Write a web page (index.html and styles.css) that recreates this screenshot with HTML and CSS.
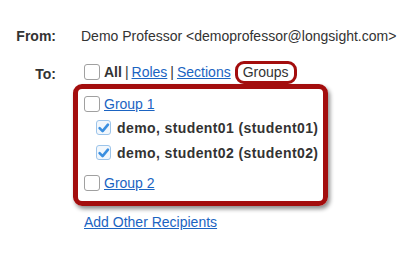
FILE: index.html
```html
<!DOCTYPE html>
<html lang="en">
<head>
  <meta charset="utf-8">
  <title>Compose Message</title>
  <link rel="stylesheet" href="styles.css">
</head>
<body>
  <div class="compose">
    <div class="row">
      <span class="label">From:</span>
      <span class="value">Demo Professor &lt;demoprofessor@longsight.com&gt;</span>
    </div>

    <div class="row">
      <span class="label label-to">To:</span>
      <div class="value">
        <div class="picker">
          <span class="check"></span>
          <strong class="all">All</strong>
          <span class="sep">|</span>
          <a href="#" class="link">Roles</a>
          <span class="sep">|</span>
          <a href="#" class="link">Sections</a>
          <span class="tab-current">Groups</span>
        </div>

        <!-- highlighted group list -->
        <div class="group-box">
          <div class="item">
            <span class="check"></span>
            <a href="#" class="link">Group 1</a>
          </div>
          <div class="item member">
            <span class="check checked">
              <svg viewBox="0 0 14 14" width="14" height="14"><path d="M2.8 7.2 L6 10.4 L11.8 3.4" fill="none" stroke="#3b8fe0" stroke-width="2.8" stroke-linecap="round" stroke-linejoin="round"/></svg>
            </span>
            <b class="name">demo, student01 (student01)</b>
          </div>
          <div class="item member">
            <span class="check checked">
              <svg viewBox="0 0 14 14" width="14" height="14"><path d="M2.8 7.2 L6 10.4 L11.8 3.4" fill="none" stroke="#3b8fe0" stroke-width="2.8" stroke-linecap="round" stroke-linejoin="round"/></svg>
            </span>
            <b class="name">demo, student02 (student02)</b>
          </div>
          <div class="item last">
            <span class="check"></span>
            <a href="#" class="link">Group 2</a>
          </div>
        </div>

        <a href="#" class="link add-link">Add Other Recipients</a>
      </div>
    </div>
  </div>
</body>
</html>
```

FILE: styles.css
```css
:root {
  --text-color: #333333;
  --link-color: #1b64c2;
  --mark-color: #a30d0d;
  --check-border: #a0a0a0;
}

* {
  margin: 0;
  padding: 0;
  box-sizing: border-box;
}

body {
  font-family: "Liberation Sans", Arial, sans-serif;
  font-size: 14px;
  color: var(--text-color);
  background: #ffffff;
}

.compose {
  padding-top: 27px;
}

.row {
  display: flex;
  gap: 25px;
  margin-bottom: 15px;
}

.label {
  width: 56px;
  text-align: right;
  font-weight: bold;
  line-height: 18px;
}

.label-to {
  padding-top: 5px;
}

.value {
  line-height: 18px;
}

.picker {
  display: flex;
  align-items: center;
  height: 24px;
  padding-left: 3px;
  white-space: nowrap;
}

.check {
  width: 16px;
  height: 16px;
  border: 1px solid var(--check-border);
  border-radius: 3px;
  background: #ffffff;
  display: inline-flex;
  align-items: center;
  justify-content: center;
  flex-shrink: 0;
}

.check.checked {
  width: 15px;
  height: 15px;
  border-color: #9cc4ea;
  background: #f2f7fc;
}

.all {
  margin-left: 4px;
}

.sep {
  margin: 0 3px;
}

.link {
  color: var(--link-color);
  text-decoration: underline;
}

.tab-current {
  margin-left: 4px;
  padding: 0 5px;
  line-height: 17px;
  border: 3px solid var(--mark-color);
  border-radius: 9px;
}

.group-box {
  margin-left: -8px;
  width: 255px;
  padding: 7px 0 10px 6px;
  border: 5px solid var(--mark-color);
  border-radius: 9px;
  box-shadow: 2px 3px 4px rgba(0, 0, 0, 0.45);
}

.item {
  display: flex;
  align-items: center;
  gap: 4px;
  height: 25px;
  white-space: nowrap;
}

.item:first-child {
  height: 16px;
  margin-bottom: 3px;
}

.member {
  padding-left: 12px;
  gap: 6px;
}

.name {
  letter-spacing: 0.4px;
}

.last {
  margin-top: 10px;
  height: 16px;
}

.add-link {
  display: inline-block;
  margin: 7px 0 0 3px;
}
```
